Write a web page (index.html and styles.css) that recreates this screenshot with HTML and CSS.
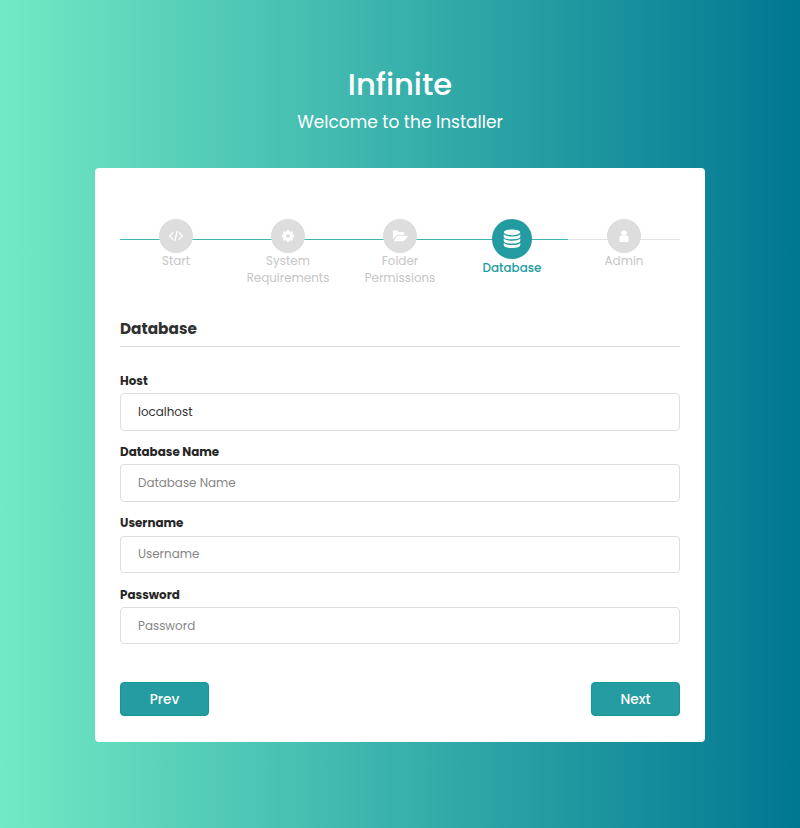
FILE: index.html
```html
<!DOCTYPE html>
<html lang="en">
<head>
<meta charset="utf-8">
<title>Infinite Installer</title>
<link rel="stylesheet" href="styles.css">
</head>
<body>
<header class="top">
  <h1>Infinite</h1>
  <p>Welcome to the Installer</p>
</header>
<main class="card">
  <ol class="steps">
    <li class="step">
      <span class="dot"><svg width="14" height="12" viewBox="0 0 14 12" fill="none" stroke="#fff" stroke-width="1.2"><path d="M4.2 2.2.8 6l3.400 3.800M9.800 2.200 13.200 6 9.800 9.800M8.200.8 5.800 11.200"/></svg></span>
      <span class="name">Start</span>
    </li>
    <li class="step">
      <span class="dot"><svg width="12" height="12" viewBox="0 0 12 12"><g fill="#fff"><rect x="4.6" width="2.8" height="12" rx=".6"/><rect x="4.6" width="2.8" height="12" rx=".6" transform="rotate(45 6 6)"/><rect x="4.6" width="2.8" height="12" rx=".6" transform="rotate(90 6 6)"/><rect x="4.6" width="2.8" height="12" rx=".6" transform="rotate(135 6 6)"/><circle cx="6" cy="6" r="4.5"/></g><circle cx="6" cy="6" r="1.9" fill="#ddd"/></svg></span>
      <span class="name">System</span>
      <span class="name">Requirements</span>
    </li>
    <li class="step">
      <span class="dot"><svg width="15" height="12" viewBox="0 0 15 12" fill="#fff"><path d="M0 9.200V1.600Q0 .6 1 .6h3q1 0 1 1v.5h5.300q1 0 1 1v1.700H5Q3.700 4.800 2.800 5.900z"/><path d="M.7 10.900 3.500 6.800q.7-1 1.800-1h8.900q1 0 .4.9l-2.600 3.400q-.8 1.100-2 1.100H1.100q-.7 0-.4-.3z"/></svg></span>
      <span class="name">Folder</span>
      <span class="name">Permissions</span>
    </li>
    <li class="step active">
      <span class="dot"><svg width="18" height="20" viewBox="0 0 18 20" fill="#fff"><ellipse cx="9" cy="3.300" rx="8.300" ry="2.900"/><path d="M.7 5.300q2.500 2.200 8.300 2.200t8.300-2.200v2.200q0 2.800-8.300 2.800T.7 7.500z"/><path d="M.7 9.600q2.500 2.200 8.300 2.200t8.300-2.200v2.200q0 2.800-8.300 2.800T.7 11.800z"/><path d="M.7 13.900q2.500 2.200 8.300 2.200t8.300-2.200v2.200q0 2.900-8.300 2.900T.7 16.100z"/></svg></span>
      <span class="name">Database</span>
    </li>
    <li class="step">
      <span class="dot"><svg width="10" height="12" viewBox="0 0 10 12" fill="#fff"><circle cx="5" cy="3" r="2.800"/><path d="M2.500 5.200Q5 7.400 7.500 5.200 9.800 5.600 9.800 9.800q0 2.200-1.800 2.200H2Q.2 12 .2 9.800.2 5.600 2.500 5.200z"/></svg></span>
      <span class="name">Admin</span>
    </li>
  </ol>
  <h2>Database</h2>
  <form class="form">
    <div class="field"><label for="host">Host</label><input id="host" type="text" value="localhost"></div>
    <div class="field"><label for="db">Database Name</label><input id="db" type="text" placeholder="Database Name"></div>
    <div class="field"><label for="user">Username</label><input id="user" type="text" placeholder="Username"></div>
    <div class="field"><label for="pass">Password</label><input id="pass" type="password" placeholder="Password"></div>
    <div class="actions"><button type="button">Prev</button><button type="button">Next</button></div>
  </form>
</main>
</body>
</html>
```
FILE: styles.css
```css
* { box-sizing: border-box; }
body {
  margin: 0;
  height: 828px;
  overflow: hidden;
  background: linear-gradient(90deg, #71eac5 0%, #007791 100%);
  font-family: Poppins, Inter, sans-serif;
  font-size: 11.9px;
  color: #303030;
}
.top { height: 168px; padding-top: 63px; text-align: center; color: #fff; }
h1 { margin: 0; font-size: 30.6px; line-height: 44px; font-weight: 500; }
.top p { margin: 2px 0 0; font-size: 17px; line-height: 26px; }
.card { width: 610px; height: 573.5px; margin: 0 auto; padding: 50.6px 25px 0; background: #fff; border-radius: 4px; }
.steps {
  display: flex;
  height: 95.4px;
  margin: 0;
  padding: 0;
  list-style: none;
  background:
    linear-gradient(#3eb5b5, #3eb5b5) 0 20.4px / 80% 1px no-repeat,
    linear-gradient(#e2e2e2, #e2e2e2) 0 20.4px / 100% 1px no-repeat;
}
.step { width: 112px; display: flex; flex-direction: column; align-items: center; color: #c6c6c6; }
.dot { width: 34px; height: 34px; margin-bottom: .4px; flex: none; border-radius: 50%; background: #ddd; display: flex; align-items: center; justify-content: center; }
.name { font-size: 11.9px; line-height: 17px; white-space: nowrap; }
.active { color: #229ca0; }
.active .dot { width: 40.8px; height: 40.8px; background: #229ca0; }
.active .name { font-weight: 500; }
h2 { height: 33px; margin: 0; border-bottom: 1px solid #ddd; font-size: 15.3px; line-height: 30px; font-weight: 700; }
.form { padding-top: 24px; }
.field { height: 71.2px; display: flex; flex-direction: column; }
label { height: 22.2px; font-size: 11.9px; line-height: 20px; font-weight: 700; align-self: flex-start; color: #262626; }
input { width: 100%; height: 37.6px; padding: 1px 17px 0; border: 1px solid #dedede; border-radius: 4px; background: #fff; color: #303030; font: 11.9px/20px Poppins, Inter, sans-serif; }
input::placeholder { color: #858585; opacity: 1; }
.actions { display: flex; justify-content: space-between; margin-top: 26.3px; }
button { width: 89px; height: 34px; padding: 1px 0 0; border: 1px solid #14959a; border-radius: 4px; background: #249ca1; color: #fff; font: 500 13.6px/20px Poppins, Inter, sans-serif; }
```
